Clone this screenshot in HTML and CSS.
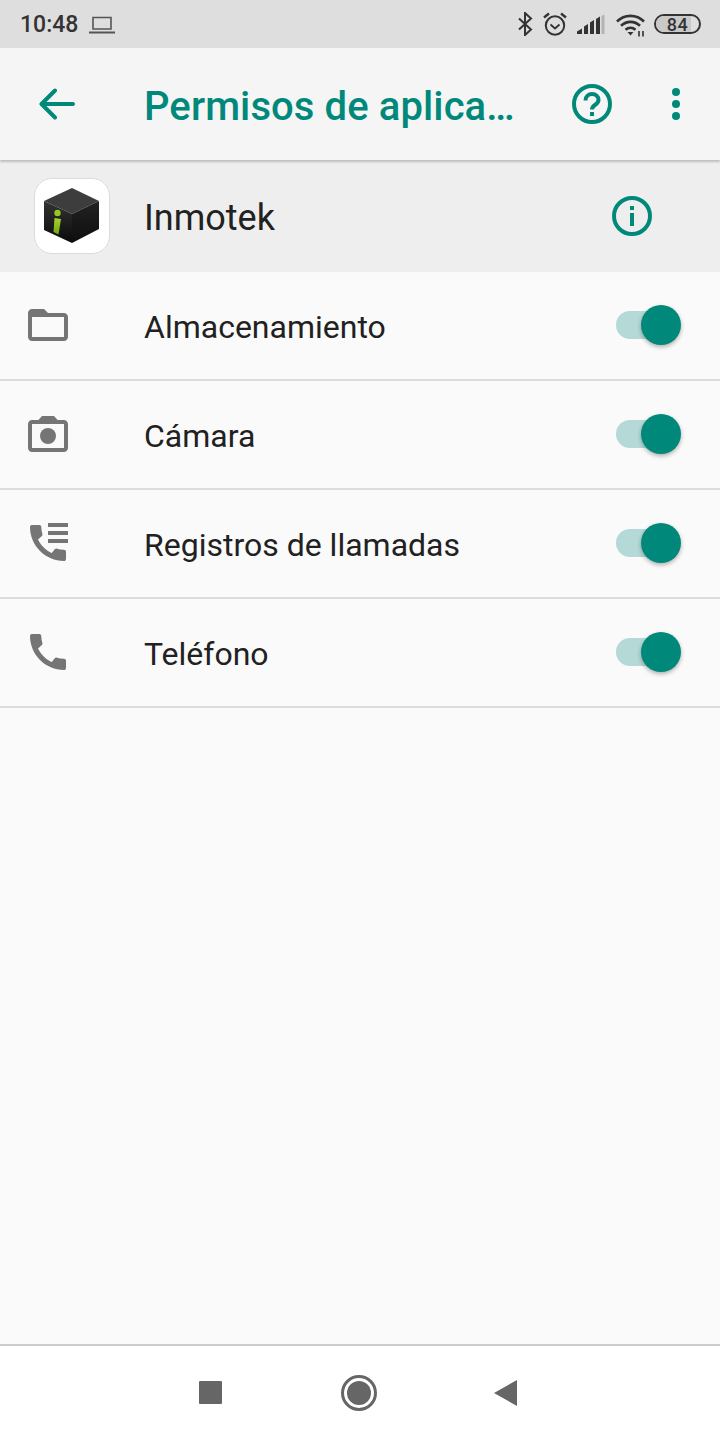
FILE: index.html
```html
<!DOCTYPE html>
<html lang="es">
<head>
<meta charset="utf-8">
<title>Permisos de aplicaciones</title>
<link rel="stylesheet" href="styles.css">
</head>
<body>
<div class="status">
  <span class="time">10:48</span>
  <svg class="laptop" width="26" height="18" viewBox="0 0 26 18"><path d="M4 1.500h18v11.500H4z" fill="none" stroke="#555" stroke-width="1.600"/><path d="M0 15.500h26v2H0z" fill="#555"/></svg>
  <span class="spacer"></span>
  <svg class="st-bt" width="16" height="24" viewBox="0 0 16 24"><path d="M2 6.500l12 11-6 5.500V1l6 5.500-12 11" fill="none" stroke="#333" stroke-width="2"/></svg>
  <svg class="st-alarm" width="24" height="24" viewBox="0 0 24 24"><circle cx="12" cy="13.500" r="9.200" fill="none" stroke="#333" stroke-width="2"/><path d="M7.500 12.500l4.500 4 4.500-4" fill="none" stroke="#333" stroke-width="1.800"/><path d="M1 5.500L6 1.500M23 5.500L18 1.500" stroke="#333" stroke-width="2.400"/></svg>
  <svg class="st-signal" width="28" height="21" viewBox="0 0 28 21"><path d="M0 20v-2.500l5-3V20z" fill="#333"/><path d="M7 20v-7.500l4-2.500v10z" fill="#333"/><path d="M13 20V8.500l4-2.500v14z" fill="#333"/><path d="M19 20V5l4-2.500V20z" fill="#333"/><path d="M24.500 20V2l3-1.500V20z" fill="#b4b4b4"/></svg>
  <svg class="st-wifi" width="30" height="24" viewBox="0 0 30 24"><path d="M1 8.500C8.500 1 20.500 1 28 8.500M5 12.800c5.500-5.300 13.500-5.300 19 0M9.500 16.800c3-2.700 7-2.700 10 0" fill="none" stroke="#333" stroke-width="2.600"/><path d="M11.500 19h6l-3 3.500z" fill="#333"/><path d="M23 18v5.500M27 18v5.500" stroke="#444" stroke-width="1.800"/></svg>
  <div class="battery"><span class="battery-fill"></span><span class="battery-num">84</span></div>
</div>

<header class="toolbar">
  <svg class="back" width="36" height="32" viewBox="0 0 36 32"><path d="M34 16H3M16 2.500L2.500 16 16 29.500" fill="none" stroke="#00897b" stroke-width="4" stroke-linecap="round" stroke-linejoin="round"/></svg>
  <h1 class="title">Permisos de aplica…</h1>
  <svg class="help" width="40" height="40" viewBox="0 0 40 40"><circle cx="20" cy="20" r="18" fill="none" stroke="#00897b" stroke-width="4"/><path d="M13.500 16.500c0-8.500 13-8.500 13-.5 0 5-6.500 4.500-6.500 9.500" fill="none" stroke="#00897b" stroke-width="4"/><path d="M18 28h4v4h-4z" fill="#00897b"/></svg>
  <div class="dots"><i></i><i></i><i></i></div>
</header>

<div class="app-row">
  <div class="app-icon">
    <svg width="76" height="76" viewBox="0 0 76 76">
      <defs>
        <linearGradient id="cubeLeft" x1="0" y1="0" x2="0" y2="1"><stop offset="0" stop-color="#333"/><stop offset="1" stop-color="#0a0a0a"/></linearGradient>
        <linearGradient id="cubeRight" x1="0" y1="0" x2="0" y2="1"><stop offset="0" stop-color="#222"/><stop offset="1" stop-color="#0e0e0e"/></linearGradient>
        <linearGradient id="stem" x1="0" y1="0" x2="0" y2="1"><stop offset="0" stop-color="#a6d42a"/><stop offset="1" stop-color="#6ea516"/></linearGradient>
      </defs>
      <path d="M38 10L65 23 38 36 10 23z" fill="#3d3d3d"/>
      <path d="M10 23L38 36V65L10 52z" fill="url(#cubeLeft)"/>
      <path d="M65 23L38 36V65L65 51z" fill="url(#cubeRight)"/>
      <circle cx="23.500" cy="35" r="3.200" fill="#95c823"/>
      <path d="M20.500 40l6.500 1-2.500 15.500-5-2.500z" fill="url(#stem)"/>
    </svg>
  </div>
  <span class="app-name">Inmotek</span>
  <svg class="info" width="40" height="40" viewBox="0 0 40 40"><circle cx="20" cy="20" r="18" fill="none" stroke="#00897b" stroke-width="4"/><path d="M18 10h4v4h-4zM18 17h4v13h-4z" fill="#00897b"/></svg>
</div>

<main class="list">
  <div class="row">
    <svg class="row-icon" width="48" height="48" viewBox="0 0 24 24"><path d="M20 6h-8l-2-2H4c-1.100 0-1.990.9-1.990 2L2 18c0 1.100.9 2 2 2h16c1.100 0 2-.9 2-2V8c0-1.100-.9-2-2-2zm0 12H4V8h16v10z"/></svg>
    <span class="row-label">Almacenamiento</span>
    <div class="switch"><span class="thumb"></span></div>
  </div>
  <div class="row">
    <svg class="row-icon" width="48" height="48" viewBox="0 0 24 24"><path d="M20 5h-3.200L15 3H9L7.200 5H4c-1.100 0-2 .9-2 2v12c0 1.100.9 2 2 2h16c1.100 0 2-.9 2-2V7c0-1.100-.9-2-2-2zm0 14H4V7h16v12z"/><circle cx="12" cy="13" r="4"/></svg>
    <span class="row-label">Cámara</span>
    <div class="switch"><span class="thumb"></span></div>
  </div>
  <div class="row">
    <svg class="row-icon" width="48" height="48" viewBox="0 0 24 24"><path d="M20.010 15.380c-1.230 0-2.420-.2-3.530-.56-.35-.12-.74-.03-1.010.24l-1.570 1.970c-2.830-1.350-5.480-3.900-6.890-6.830l1.950-1.660c.27-.28.35-.67.24-1.020-.37-1.110-.56-2.300-.56-3.530 0-.54-.45-.99-.99-.99H4.190C3.650 3 3 3.240 3 3.990 3 13.280 10.730 21 20.010 21c.71 0 .99-.63.99-1.180v-3.450c0-.54-.45-.99-.99-.99z"/><path d="M12 2h10v2H12zM12 6h10v2H12zM12 10h10v2H12z"/></svg>
    <span class="row-label">Registros de llamadas</span>
    <div class="switch"><span class="thumb"></span></div>
  </div>
  <div class="row">
    <svg class="row-icon" width="48" height="48" viewBox="0 0 24 24"><path d="M20.010 15.380c-1.230 0-2.420-.2-3.530-.56-.35-.12-.74-.03-1.010.24l-1.570 1.970c-2.830-1.350-5.480-3.900-6.890-6.830l1.950-1.660c.27-.28.35-.67.24-1.020-.37-1.110-.56-2.300-.56-3.530 0-.54-.45-.99-.99-.99H4.190C3.650 3 3 3.240 3 3.990 3 13.280 10.730 21 20.010 21c.71 0 .99-.63.99-1.180v-3.450c0-.54-.45-.99-.99-.99z"/></svg>
    <span class="row-label">Teléfono</span>
    <div class="switch"><span class="thumb"></span></div>
  </div>
</main>

<nav class="navbar">
  <span class="nav-square"></span>
  <span class="nav-home"><span class="nav-home-dot"></span></span>
  <svg class="nav-back" width="23" height="26" viewBox="0 0 23 26"><path d="M23 0v26L0 13z" fill="#666"/></svg>
</nav>
</body>
</html>
```

FILE: styles.css
```css
* { box-sizing: border-box; }

html, body { margin: 0; height: 100%; }

body {
  display: flex;
  flex-direction: column;
  height: 1440px;
  background: #fafafa;
  font-family: Roboto, "Noto Sans", sans-serif;
  color: #212121;
  overflow: hidden;
}

/* Status bar */
.status {
  height: 48px;
  flex: none;
  display: flex;
  align-items: center;
  padding: 0 19px 0 20px;
  background: #dedede;
  color: #333;
}
.time { font-size: 23px; font-weight: 500; width: 69px; }
.laptop { margin-top: 1px; }
.spacer { flex: 1; }
.st-bt { margin-right: 10px; }
.st-alarm { margin-right: 10px; }
.st-signal { margin-right: 11px; }
.st-wifi { margin-right: 8px; margin-top: 2px; }
.battery {
  position: relative;
  width: 47px;
  height: 20px;
  border: 2px solid #333;
  border-radius: 10px;
  display: flex;
  align-items: center;
  justify-content: center;
  overflow: hidden;
}
.battery-fill {
  position: absolute;
  left: 0;
  top: 0;
  bottom: 0;
  width: 82%;
  background: #c9c9c9;
}
.battery-num { position: relative; font-size: 18px; font-weight: 500; letter-spacing: .5px; color: #333; }

/* Toolbar */
.toolbar {
  height: 112px;
  flex: none;
  display: flex;
  align-items: center;
  padding: 0 0 0 39px;
  background: #f5f5f5;
  box-shadow: 0 2px 2px rgba(0, 0, 0, .2);
  position: relative;
  z-index: 1;
}
.back { margin-right: 69px; }
.title {
  margin: 0;
  width: 428px;
  padding-top: 4px;
  font-size: 40px;
  font-weight: 500;
  letter-spacing: .1px;
  color: #00897b;
  white-space: nowrap;
}
.dots { display: flex; flex-direction: column; gap: 4px; margin-left: 60px; }
.dots i { width: 8px; height: 8px; border-radius: 50%; background: #00897b; }

/* App header row */
.app-row {
  height: 112px;
  flex: none;
  display: flex;
  align-items: center;
  padding-left: 34px;
  background: #eeeeee;
}
.app-icon {
  width: 76px;
  height: 76px;
  margin-right: 34px;
  border-radius: 18px;
  border: 1px solid #dcdcdc;
  background: #fff;
  overflow: hidden;
}
.app-icon svg { display: block; margin: -1px; }
.app-name { font-size: 36px; width: 468px; padding-top: 4px; }
.info { margin-top: -1px; }

/* Permission rows */
.list { flex: 1; }
.row {
  height: 109px;
  display: flex;
  align-items: center;
  padding: 0 44px 2px 24px;
  border-bottom: 2px solid #dcdcdc;
}
.row-icon { fill: #757575; flex: none; margin-right: 72px; }
.row-label { flex: 1; font-size: 32px; padding-top: 5px; }
.switch {
  width: 60px;
  height: 28px;
  display: flex;
  align-items: center;
  justify-content: flex-end;
  border-radius: 14px;
  background: #b5d9d6;
}
.thumb {
  flex: none;
  width: 40px;
  height: 40px;
  margin-right: -5px;
  border-radius: 50%;
  background: #00897b;
  box-shadow: 0 2px 4px rgba(0, 0, 0, .3);
}

/* Navigation bar */
.navbar {
  height: 96px;
  flex: none;
  display: flex;
  align-items: center;
  justify-content: center;
  gap: 117px;
  padding-right: 5px;
  background: #fff;
  border-top: 2px solid #ccc;
}
.nav-square { width: 23px; height: 23px; margin: -2px 2px 0 0; border-radius: 1px; background: #666; }
.nav-home {
  width: 36px;
  height: 36px;
  display: flex;
  align-items: center;
  justify-content: center;
  border: 3px solid #666;
  border-radius: 50%;
}
.nav-home-dot { width: 24px; height: 24px; border-radius: 50%; background: #666; }
```
